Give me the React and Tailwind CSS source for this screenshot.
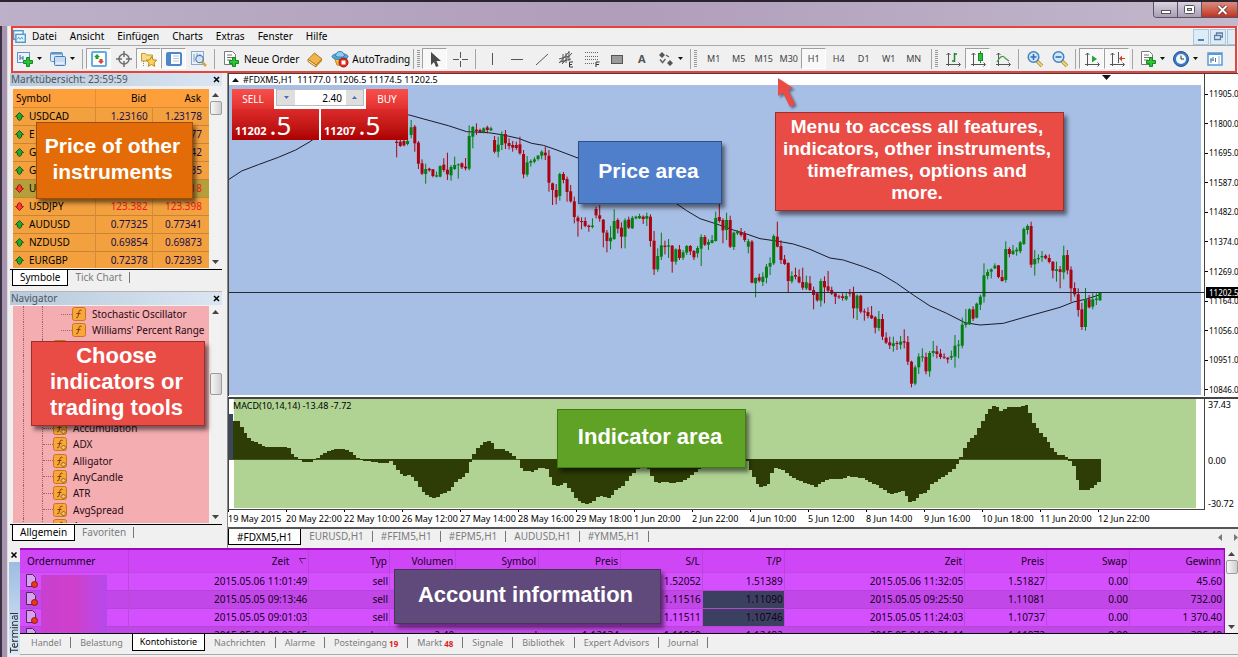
import { useState } from "react";

// Each bar: direction, high, body top, body bottom, low
const SESSIONS = [
  {
    base: 0,
    bars: `r 200 215 219 262,r 205 215 228 231,r 205 213 226 229,g 205 213 222 226,g 150 172 195 205,r 165 170 220 245,
r 213 218 281 297,r 268 280 311 315,g 281 297 312 341,r 293 296 301 305,r 297 298 318 322,g 305 316 320 322,g 286 288 320 322,
r 265 284 300 306,r 248 299 313 330,g 285 291 316 332,g 260 285 297 300,g 280 283 286 326,r 277 280 292 297,r 264 290 295 301,
g 166 198 296 301,g 168 171 200 235,r 160 179 183 195,r 176 180 186 188,g 172 175 187 190,r 167 172 180 190,g 170 175 181 183,
r 198 210 245 250,g 200 224 245 262,g 184 192 225 240,r 180 192 220 237,r 205 219 228 238,r 213 225 233 245,r 215 225 234 240,
r 200 223 250 254,r 240 252 313 325,g 258 277 314 320,g 268 273 278 290,g 262 268 275 280,g 255 257 267 272,g 241 245 257 268,
r 230 248 256 270,r 240 257 338 365,r 338 340 360 405`,
  },
  {
    base: 300,
    bars: `r 42 60 82 103,g 8 12 78 92,r 6 12 30 40,r 20 27 66 95,r 45 64 94 98,r 80 94 141 160,r 137 143 154 200,r 142 153 156 178,
r 142 153 168 172,r 164 167 171 185,g 145 167 171 175,r 110 117 136 145,r 105 136 146 155,r 147 149 188 232,r 180 188 213 247,
g 168 203 214 238,g 118 153 207 210,r 145 150 176 190,r 157 173 200 235,g 145 151 200 235,r 140 149 173 177,g 138 144 175 177,
g 137 140 145 148,g 131 138 145 147,r 136 140 147 162,g 128 138 146 168,r 133 140 213 230,r 183 212 298 315,g 235 258 298 305,
g 188 226 260 270,r 212 227 231 253,g 207 226 230 264,r 225 227 275 308,g 235 238 275 284,r 225 238 264 270,g 240 247 263 270,
g 225 228 248 255,r 225 228 244 255,r 240 243 262 270,g 228 234 250 263,g 193 201 236 288,r 195 201 224 228,g 208 216 224 240,
g 195 210 219 220,g 125 144 213 215,r 98 141 153 158,r 145 150 181 220,g 128 150 180 210,r 137 150 230 234,g 185 188 231 240,
g 180 184 190 195,r 174 186 195 200,r 183 190 210 216,g 207 214 230 250,r 210 215 338 340,g 322 324 340 382,r 311 322 332 337,
g 307 320 336 348,g 282 290 323 340,g 262 279 290 315,g 193 198 280 285,r 155 200 230 232,r 211 228 270 282,r 255 268 282 285,
r 277 279 333 367,g 304 318 334 340,r 293 315 320 328,r 298 320 337 340,r 293 336 353 360,g 317 337 355 360,r 318 340 360 363,
r 350 360 375 418,r 368 370 391 395,g 326 333 392 410,r 319 333 352 400,r 303 349 362 368,r 350 360 371 375,r 368 370 380 402,
r 374 379 382 387,r 370 379 384 392,g 368 378 388 392,r 357 368 371 380,r 350 369 415 445,g 373 377 415 450,r 374 377 425 430,
r 416 424 427 452,r 412 426 438 445,r 408 436 445 447,r 438 442 473 490,g 423 447 474 483,r 432 447 500 510,r 487 503 518 522,
r 500 517 526 537,g 500 520 528 545,r 513 519 522 540`,
  },
  {
    base: 390,
    bars: `g 408 425 434 448,r 388 424 428 445,r 408 426 485 495,r 482 485 551 562,g 496 502 551 556,g 460 470 502 522,g 445 469 472 485,
r 458 471 514 523,g 453 459 514 530,g 423 453 459 470,r 437 454 462 475,r 447 461 471 477,r 460 470 473 477,r 472 473 478 490,
g 452 468 473 480,g 405 437 470 503,g 420 434 437 475,g 353 374 437 445,g 327 369 375 383,g 325 328 373 375,r 319 328 356 363,
g 308 311 353 355,g 284 290 314 330,g 190 226 290 308,g 208 216 228 238,g 205 208 215 235,g 190 197 205 207,r 195 196 231 235,
r 210 231 243 245,g 124 147 240 248,r 142 147 162 172,g 135 152 162 165,g 142 149 154 167,g 123 127 154 160,g 82 87 132 135,
g 73 78 90 103,r 65 78 194 203,g 150 177 193 227,g 163 174 178 190,g 153 168 172 185,r 163 167 175 178,r 163 174 186 190,
r 184 185 212 235,g 185 208 213 245,r 198 208 216 265,g 137 166 217 238,r 150 165 211 223,r 199 209 265 305,r 247 264 283 290,
r 265 283 330 350,r 308 328 381 390,g 264 297 381 392,r 285 298 322 325,g 280 298 320 328,g 280 296 300 315,g 276 277 301 303`,
  },
];

const CANDLES = SESSIONS.flatMap(({ base, bars }) =>
  bars.split(",").map((bar) => {
    const [dir, ...v] = bar.trim().split(" ");
    const [high, top, bottom, low] = v.map((n) => Number(n) + base);
    return { up: dir === "g", high, top, bottom, low };
  })
);

const FIRST_X = 515;
const LAST_X = 2625;
const CANDLE_STEP = (LAST_X - FIRST_X) / (CANDLES.length - 1);

const MOVING_AVERAGE =
  "12,328 50,303 100,284 160,262 212,240 255,215 330,160 430,130 553,135 600,148 670,167 725,185 790,188 830,194 880,205 920,220 955,226 990,238 1180,310 1350,398 1385,422 1425,446 1475,462 1525,480 1565,492 1605,506 1655,513 1705,522 1755,538 1815,564 1855,570 1915,590 1965,610 2015,640 2065,675 2115,708 2165,730 2220,758 2265,765 2335,760 2415,737 2505,712 2545,696 2585,687 2625,674";

const MACD_POINTS = [
  [12, 60], [24, 92], [38, 93], [50, 110], [62, 130], [75, 148], [100, 160], [120, 170], [165, 172], [190, 172],
  [205, 195], [220, 206], [235, 216], [255, 218], [270, 210], [300, 188], [330, 178], [360, 178], [375, 186],
  [390, 198], [410, 210], [450, 216], [480, 220], [500, 212], [515, 235], [535, 260], [555, 255], [575, 275],
  [590, 300], [610, 320], [630, 325], [650, 312], [670, 305], [690, 280], [710, 262], [722, 258], [732, 228],
  [742, 200], [760, 172], [780, 155], [798, 150], [810, 176], [830, 176], [860, 192], [878, 206], [888, 232],
  [900, 243], [925, 245], [950, 232], [965, 235], [975, 260], [990, 290], [1020, 280], [1040, 305], [1055, 328],
  [1085, 343], [1105, 335], [1120, 317], [1155, 325], [1170, 300], [1190, 293], [1210, 265], [1240, 235],
  [1270, 235], [1285, 265], [1295, 282], [1320, 275], [1340, 280], [1375, 275], [1400, 255], [1420, 240],
  [1450, 225], [1520, 200], [1560, 200], [1575, 240], [1600, 285], [1613, 292], [1635, 280], [1640, 250],
  [1650, 235], [1675, 240], [1695, 258], [1725, 273], [1777, 292], [1785, 278], [1815, 268], [1855, 265],
  [1870, 258], [1915, 265], [1955, 285], [1995, 312], [2035, 303], [2055, 335], [2070, 333], [2085, 312],
  [2105, 308], [2120, 282], [2155, 260], [2185, 240], [2205, 208], [2215, 180], [2230, 155], [2255, 130],
  [2275, 88], [2290, 60], [2310, 45], [2330, 65], [2345, 50], [2385, 52], [2408, 42], [2420, 90], [2445, 125],
  [2465, 150], [2485, 180], [2505, 198], [2520, 194], [2530, 208], [2545, 225], [2555, 265], [2565, 300],
  [2595, 300], [2615, 280], [2630, 270],
];

const macdAt = (x) => {
  const i = MACD_POINTS.findIndex(([px]) => px >= x);
  if (i <= 0) return MACD_POINTS[0][1];
  const [x0, y0] = MACD_POINTS[i - 1];
  const [x1, y1] = MACD_POINTS[i];
  return Math.round((y0 + ((y1 - y0) * (x - x0)) / (x1 - x0)) / 3) * 3;
};

const MACD_BARS = Array.from({ length: 240 }, (_, i) => 12 + i * 10.9).map((x) => ({
  x,
  y: macdAt(x + 5),
}));

const SYMBOLS = [
  { name: "USDCAD", bid: "1.23160", ask: "1.23178", up: true },
  { name: "E", bid: "", ask: "77", up: true },
  { name: "G", bid: "", ask: "42", up: true },
  { name: "G", bid: "", ask: "35", up: true },
  { name: "U", bid: "", ask: "18", up: false, selected: true },
  { name: "USDJPY", bid: "123.382", ask: "123.398", up: false },
  { name: "AUDUSD", bid: "0.77325", ask: "0.77341", up: true },
  { name: "NZDUSD", bid: "0.69854", ask: "0.69873", up: true },
  { name: "EURGBP", bid: "0.72378", ask: "0.72393", up: true },
];

const NAV_ITEMS = [
  { name: "Stochastic Oscillator", sub: true },
  { name: "Williams' Percent Range", sub: true },
  { name: "" }, { name: "" }, { name: "" }, { name: "" }, { name: "" },
  { name: "Accumulation" },
  { name: "ADX" },
  { name: "Alligator" },
  { name: "AnyCandle" },
  { name: "ATR" },
  { name: "AvgSpread" },
  { name: "A" },
];

const PRICES = ["11905.0", "11800.0", "11695.0", "11587.0", "11482.0", "11374.0", "11269.0", "11164.0", "11056.0", "10951.0", "10846.0"];

const DATES = [
  "19 May 2015", "20 May 22:00", "22 May 10:00", "26 May 12:00", "27 May 14:00", "28 May 16:00", "29 May 18:00",
  "1 Jun 20:00", "2 Jun 22:00", "4 Jun 10:00", "5 Jun 12:00", "8 Jun 14:00", "9 Jun 16:00", "10 Jun 18:00",
  "11 Jun 20:00", "12 Jun 22:00",
];

const ORDERS = [
  ["", "2015.05.06 11:01:49", "sell", "", "", "", "1.52052", "1.51389", "2015.05.06 11:32:05", "1.51827", "0.00", "45.60"],
  ["", "2015.05.05 09:13:46", "sell", "", "", "", "1.11516", "1.11090", "2015.05.05 09:25:50", "1.11081", "0.00", "732.00"],
  ["", "2015.05.05 09:01:03", "sell", "", "", "", "1.11511", "1.10746", "2015.05.05 11:24:03", "1.10737", "0.00", "1 370.40"],
  ["", "2015.05.04 09:02:15", "buy", "2.40", "eurusd", "1.12134", "1.11969", "1.12482", "2015.05.04 09:21:44", "1.11972", "0.00", "-396.40"],
];

const ORDER_HEADS = ["Ordernummer", "Zeit", "Typ", "Volumen", "Symbol", "Preis", "S/L", "T/P", "Zeit", "Preis", "Swap", "Gewinn"];
const ORDER_COLS = [
  "w-[9%]", "w-[15%]", "w-[6.7%]", "w-[5.5%]", "w-[6.9%]", "w-[6.8%]", "w-[6.8%]", "w-[6.8%]", "w-[15%]", "w-[6.8%]", "w-[6.9%]", "w-[7.8%]",
];

/* ---------- Icons ---------- */

const Icon = ({ children, size = 18 }) => (
  <svg width={size} height={size} viewBox="0 0 18 18" fill="none" className="shrink-0" aria-hidden="true">
    {children}
  </svg>
);

const Plus = ({ x, y }) => (
  <path
    transform={`translate(${x} ${y})`}
    d="M3.500.500h3v3h3v3h-3v3h-3v-3h-3v-3h3z"
    fill="#2fc13a"
    stroke="#128a1c"
  />
);

const NewChartIcon = () => (
  <Icon>
    <rect x="1.5" y="2.5" width="12" height="10" fill="#eaf3fc" stroke="#5e93c9" />
    <path d="M4 5v5M4 8h3M7 6v4" stroke="#3b6ea8" />
    <Plus x="7" y="7" />
  </Icon>
);

const ProfilesIcon = () => (
  <Icon>
    <rect x="1.5" y="2.5" width="12" height="9" rx="1" fill="#dcebf9" stroke="#5e93c9" />
    <path d="M2 3.5h11" stroke="#5e93c9" strokeWidth="2" />
    <rect x="5.5" y="6.5" width="11" height="9" rx="1" fill="#c6dcf3" stroke="#4c7fb5" />
    <path d="M7 13h8" stroke="#fff" />
  </Icon>
);

const MarketIcon = () => (
  <Icon>
    <rect x="2" y="2" width="14" height="14" rx="1" fill="#fff" stroke="#62aee0" strokeWidth="2" />
    <path d="M7 4l3 3H8.500v2h-3V7H4z" fill="#18a32b" />
    <path d="M11 14l3-3h-1.500V9h-3v2H8z" fill="#e0432c" />
  </Icon>
);

const TargetIcon = () => (
  <Icon>
    <circle cx="9" cy="9" r="5" stroke="#6e6e6e" strokeWidth="1.5" />
    <path d="M9 1v6M9 11v6M1 9h6M11 9h6" stroke="#6e6e6e" strokeWidth="1.5" />
  </Icon>
);

const NavigatorIcon = () => (
  <Icon>
    <path d="M1.500 3.500h4l1 1.500h6v6h-11z" fill="#f8dc85" stroke="#c59a35" />
    <path d="M3.500 11v5" stroke="#888" strokeDasharray="1 1" />
    <path d="M11.500 6.500l1.600 3.300 3.600.4-2.700 2.500.7 3.600-3.200-1.800-3.200 1.800.7-3.600L6.300 10.200l3.600-.4z" fill="#fdd45a" stroke="#bd8618" />
  </Icon>
);

const TerminalIcon = () => (
  <Icon>
    <rect x="2" y="3" width="14" height="12" rx="1" fill="#fff" stroke="#4f86c6" strokeWidth="2" />
    <path d="M3 4h3v10H3z" fill="#4f86c6" />
    <path d="M8 6h6M8 8.500h6M8 11h6" stroke="#a9c6e6" />
  </Icon>
);

const TesterIcon = () => (
  <Icon>
    <rect x="1.5" y="1.5" width="12" height="13" fill="#eaf3fc" stroke="#86a9cf" />
    <path d="M4 4v8M7 3v6M10 4v7" stroke="#7a9cc2" />
    <path d="M12 12l4 4" stroke="#d9a441" strokeWidth="2.5" />
    <circle cx="9.5" cy="9" r="3.7" fill="#cfe6fb" fillOpacity=".8" stroke="#5b7fa5" strokeWidth="1.2" />
  </Icon>
);

const OrderIcon = () => (
  <Icon>
    <path d="M2.500 1.500h8l3 3v10h-11z" fill="#fff" stroke="#777" />
    <path d="M5 5h5M5 7.500h6M5 10h4" stroke="#777" />
    <Plus x="7" y="7" />
  </Icon>
);

const BookIcon = () => (
  <Icon>
    <path d="M2 9.500L8.500 3l7.500 6-6 6z" fill="#f0b44e" stroke="#b57518" />
    <path d="M2 9.500v2.200L10 17v-2z" fill="#fff3cf" stroke="#b57518" />
    <path d="M10 17l6-6V9l-6 6z" fill="#c98a2a" />
  </Icon>
);

const AutoIcon = () => (
  <Icon>
    <path d="M3 7l3 8 7 1 3-8z" fill="#f3c043" stroke="#bb8518" />
    <ellipse cx="9" cy="6.5" rx="8" ry="3" fill="#5aa7da" stroke="#2f7eb5" />
    <path d="M4.500 6c0-6 9-6 9 0-2 1.600-7 1.600-9 0z" fill="#8fcdf0" stroke="#2f7eb5" />
    <circle cx="12.5" cy="12.5" r="4.5" fill="#dd2e22" stroke="#a8170f" />
    <rect x="10.5" y="10.5" width="4" height="4" fill="#fff" />
  </Icon>
);

const CursorIcon = () => (
  <Icon>
    <path d="M5 2v13l3-3 2 5 2.500-1-2-5H15z" fill="#4a4a4a" />
  </Icon>
);

const CrossIcon = () => (
  <Icon>
    <path d="M9.500 2v6M9.500 11v6M2 9.500h6M11 9.500h6" stroke="#555" />
  </Icon>
);

const ChannelIcon = () => (
  <Icon>
    <path d="M1 13L11 2M4 14L14 3M1 9l10-3M2 12l11-3M5 4v9M8 3v10M11 1v10" stroke="#555" />
    <path d="M15 12h-3.500v5H15M11.500 14.500H14" stroke="#333" />
  </Icon>
);

const FiboIcon = () => (
  <Icon>
    <path d="M2 2.500h13M2 6.500h13M2 9.500h13M2 13.500h9" stroke="#666" strokeDasharray="1 1" />
    <path d="M13 17v-5h3.500M13 14.500h3" stroke="#333" />
  </Icon>
);

const ShapesIcon = () => (
  <Icon>
    <path d="M5 2l3 3-3 3-3-3zM13 10l3 3-3 3-3-3z" fill="#555" />
    <path d="M3 9.500l2.500 3L8.500 9M9 5l3 2" stroke="#666" strokeWidth="1.5" />
  </Icon>
);

const Axes = () => <path d="M4.500 3v13M2 14.500h14M2.500 5l2-2 2 2M14.500 12.500l2 2-2 2" stroke="#555" />;

const BarsIcon = () => (
  <Icon>
    <Axes />
    <path d="M10.500 3v9M8 11h2.500M10.500 4H13" stroke="#1c8a2b" strokeWidth="1.5" />
  </Icon>
);

const CandleIcon = () => (
  <Icon>
    <Axes />
    <path d="M11.500 1v12" stroke="#1c8a2b" />
    <rect x="9.5" y="3.5" width="4" height="7" fill="#27c23a" stroke="#1c8a2b" />
  </Icon>
);

const LineIcon = () => (
  <Icon>
    <Axes />
    <path d="M3 12c3-6 6-7 8-4l4 3" stroke="#3f9a45" strokeWidth="1.2" />
  </Icon>
);

const ZoomIcon = ({ plus }) => (
  <Icon>
    <path d="M11 11l5 5" stroke="#b5892e" strokeWidth="3.5" />
    <path d="M11 11l5 5" stroke="#f7d373" strokeWidth="1.8" />
    <circle cx="7.5" cy="7" r="5.3" fill="#d3e9fb" stroke="#3f83c4" strokeWidth="1.5" />
    <path d={plus ? "M4.500 7h6M7.500 4v6" : "M4.500 7h6"} stroke="#2f6fb0" strokeWidth="1.6" />
  </Icon>
);

const ScrollIcon = () => (
  <Icon>
    <Axes />
    <path d="M9 5.500l5 3.500-5 3.500z" fill="#2aa43a" />
  </Icon>
);

const ShiftIcon = () => (
  <Icon>
    <Axes />
    <path d="M10.500 2v11" stroke="#555" />
    <path d="M17 8h-3V5.500L11 8.500l3 3V9h3z" fill="#d04424" />
  </Icon>
);

const ClockIcon = () => (
  <Icon>
    <circle cx="9" cy="9" r="7.5" fill="#3d78c4" stroke="#24528f" />
    <circle cx="9" cy="9" r="5" fill="#f2f8ff" />
    <path d="M9 5.500V9h3" stroke="#333" />
  </Icon>
);

const TemplateIcon = () => (
  <Icon>
    <rect x="2" y="3" width="14" height="12" fill="#fff" stroke="#5a9bd6" strokeWidth="1.5" />
    <path d="M2 4h14" stroke="#5a9bd6" strokeWidth="2" />
    <path d="M5 8v5M7 7v4M9.500 8v4M4 10h4" stroke="#4b78ab" />
    <path d="M12 7h2M12 9h2M12 11h2M12 13h2" stroke="#8db3dc" />
  </Icon>
);

const Caret = () => (
  <svg width="5" height="3" viewBox="0 0 5 3" className="shrink-0" aria-hidden="true">
    <path d="M0 0h5L2.500 3z" fill="#111" />
  </svg>
);

const Arrow = ({ up }) => (
  <svg width="9" height="9" viewBox="0 0 9 9" className="shrink-0" aria-hidden="true">
    {up ? (
      <path d="M4.500.5l4 4-2 .5v2l-2 1.500-2-1.500V5L.5 4.500z" fill="#27a62e" stroke="#0f5c12" />
    ) : (
      <path d="M4.500 8.500l4-4-2-.5V2l-2-1.500L2.500 2v2l-2 .5z" fill="#f0402c" stroke="#a31414" />
    )}
  </svg>
);

const FnIcon = ({ sub }) => (
  <svg width="14" height="14" viewBox="0 0 14 14" className="shrink-0" aria-hidden="true">
    <rect x=".5" y=".5" width="13" height="13" rx="2" fill="#f9a63a" stroke="#c9761a" />
    <path d="M9.500 3.500c-2-1-2.500.5-2.700 2L6 9.500c-.3 1.300-1 1.500-2 1M4.500 6.500h4" fill="none" stroke="#7c3f06" />
    {!sub && <path d="M10.500 8l2.500 2.500-2.500 2.500L8 10.500z" fill="#f7c56b" stroke="#8a5a1a" />}
  </svg>
);

const OrderDocIcon = () => (
  <svg width="13" height="14" viewBox="0 0 13 14" aria-hidden="true">
    <path d="M1.500.5h6l3 3v9h-9z" fill="#d9a0f2" stroke="#4d2a5c" />
    <circle cx="9.5" cy="10.5" r="3" fill="#e8381f" stroke="#8e1a0b" />
  </svg>
);

/* ---------- Shared pieces ---------- */

const Tool = ({ label, pressed, children }) => (
  <button
    type="button"
    aria-label={label}
    className={`flex h-[21px] w-[25px] items-center justify-center border ${
      pressed ? "border-[#a0a0a0] border-r-white border-b-white bg-[#f8f8f8]" : "border-transparent"
    }`}
  >
    {children}
  </button>
);

const MenuTool = ({ label, children }) => (
  <button type="button" aria-label={label} className="flex h-[21px] w-[33px] items-center gap-[3px] px-[3px]">
    {children}
    <Caret />
  </button>
);

const Sep = () => <span className="mx-[3px] h-[20px] w-px shrink-0 bg-[#a5a5a5]" />;

const Grip = () => (
  <span className="mr-[2px] h-[18px] w-[3px] shrink-0 bg-[repeating-linear-gradient(#9a9a9a_0_1px,#f0f0f0_1px_2px)]" />
);

const Callout = ({ className, children }) => (
  <div
    className={`absolute z-10 flex items-center justify-center border pb-[3px] text-center font-['Liberation_Sans',Arial,sans-serif] font-bold whitespace-nowrap text-white shadow-[3px_4px_4px_rgba(0,0,0,0.5)] ${className}`}
  >
    {children}
  </div>
);

const Scrollbar = ({ thumb }) => (
  <div className="flex w-[13px] shrink-0 flex-col items-center justify-between bg-[#f1f1f1] py-1">
    <svg width="7" height="4" viewBox="0 0 7 4"><path d="M0 4h7L3.500 0z" fill="#444" /></svg>
    <span className={`w-3 rounded-[2px] border border-[#9c9c9c] bg-linear-to-r from-[#f8f8f8] to-[#cfcfcf] ${thumb}`} />
    <span className="flex-1" />
    <svg width="7" height="4" viewBox="0 0 7 4"><path d="M0 0h7L3.500 4z" fill="#444" /></svg>
  </div>
);

const DockTitle = ({ children }) => (
  <div className="flex h-[13px] items-center justify-between bg-linear-to-r from-[#b8c9da] to-[#dbe6f2] pr-[2px] pl-px text-[#4a5560]">
    <h2 className="pb-[2px]">{children}</h2>
    <button type="button" aria-label="Schließen" className="flex">
      <svg width="7" height="7" viewBox="0 0 7 7"><path d="M1 1l5 5M6 1L1 6" stroke="#000" strokeWidth="1.5" /></svg>
    </button>
  </div>
);

const DockTabs = ({ tabs }) => (
  <div className="flex h-[17px] items-start border-t border-black pl-[2px]">
    <button type="button" className="h-[16px] border border-t-0 border-black bg-white px-[7px] leading-[13px] text-black">
      {tabs[0]}
    </button>
    <button type="button" className="px-[7px] leading-[14px] text-[#7c7c7c]">{tabs[1]}</button>
    <span className="mt-[2px] h-[11px] w-px bg-[#777]" />
  </div>
);

/* ---------- Sections ---------- */

const TitleBar = () => (
  <div className="flex h-[26px] justify-end border-t-2 border-[#2b2430] bg-linear-to-r from-[#bdb0c8] via-[#b09dba] to-[#c3b8cc]">
    <div className="flex h-4 overflow-hidden rounded-bl-[4px] border border-t-0 border-[#5c5266]">
      <button type="button" aria-label="Minimieren" className="flex w-6 items-center justify-center border-r border-[#5c5266] bg-linear-to-b from-[#d9d2e0] to-[#a99fb4]">
        <span className="mt-1 h-1 w-[10px] border border-[#555] bg-white" />
      </button>
      <button type="button" aria-label="Wiederherstellen" className="flex w-6 items-center justify-center border-r border-[#5c5266] bg-linear-to-b from-[#d9d2e0] to-[#a99fb4]">
        <svg width="11" height="9" viewBox="0 0 11 9">
          <rect x=".5" y=".5" width="10" height="8" rx="1" fill="#fff" stroke="#555" />
          <rect x="3.5" y="3.5" width="4" height="2" fill="#cfc6d6" stroke="#555" />
        </svg>
      </button>
      <button type="button" aria-label="Fenster schließen" className="flex w-[35px] items-center justify-center bg-linear-to-b from-[#d98b80] to-[#bf2f1d] pl-[6px]">
        <svg width="11" height="10" viewBox="0 0 11 10">
          <path d="M1.500 1l8 8M9.500 1l-8 8" stroke="#5a2a2a" strokeWidth="3.5" />
          <path d="M1.500 1l8 8M9.500 1l-8 8" stroke="#fff" strokeWidth="2" />
        </svg>
      </button>
    </div>
  </div>
);

const MenuBar = () => (
  <nav className="flex h-[18px] items-center border-b border-[#a9a9a9]">
    <Icon size={13}>
      <rect x="1" y="1" width="13" height="12" fill="#fff" stroke="#4f9bd0" strokeWidth="2" />
      <rect x="4" y="6" width="13" height="11" fill="#e7f4fc" stroke="#4f9bd0" strokeWidth="2" />
      <path d="M6 13l2-3 2 3 2-3 2 3" stroke="#3a79ad" />
    </Icon>
    <ul className="ml-[6px] flex gap-[13px] pb-[2px] text-[10px] text-black">
      {["Datei", "Ansicht", "Einfügen", "Charts", "Extras", "Fenster", "Hilfe"].map((item) => (
        <li key={item}>
          <button type="button">{item}</button>
        </li>
      ))}
    </ul>
    <div className="ml-auto flex gap-px overflow-hidden">
      <button type="button" aria-label="Chart minimieren" className="flex h-4 w-4 items-end justify-center border border-[#a9c6dc] bg-[#dcedf7] pb-[3px]">
        <span className="h-[2px] w-[6px] bg-[#5b7ea0]" />
      </button>
      <button type="button" aria-label="Chart wiederherstellen" className="flex h-4 w-4 items-center justify-center border border-[#a9c6dc] bg-[#dcedf7]">
        <svg width="9" height="9" viewBox="0 0 9 9" fill="none" stroke="#5b7ea0"><path d="M2.500 3V1h6v4h-2M.5 3.500h6v4h-6z" strokeWidth="1.3" /></svg>
      </button>
      <button type="button" aria-label="Chart schließen" className="h-4 w-2 border border-r-0 border-[#a9c6dc] bg-[#dcedf7]" />
    </div>
  </nav>
);

const ToolBar = () => {
  const [frame, setFrame] = useState("H1");
  return (
    <div className="flex h-[25px] items-center text-[11px]">
      <MenuTool label="Neuer Chart"><NewChartIcon /></MenuTool>
      <MenuTool label="Profile"><ProfilesIcon /></MenuTool>
      <Sep />
      <Tool label="Marktübersicht" pressed><MarketIcon /></Tool>
      <Tool label="Datenfenster"><TargetIcon /></Tool>
      <Tool label="Navigator" pressed><NavigatorIcon /></Tool>
      <Tool label="Terminal" pressed><TerminalIcon /></Tool>
      <Tool label="Strategietester"><TesterIcon /></Tool>
      <Sep />
      <button type="button" className="ml-1 flex items-center gap-1 text-[10px] whitespace-nowrap text-black">
        <OrderIcon />Neue Order
      </button>
      <button type="button" aria-label="MetaEditor" className="mx-[7px]"><BookIcon /></button>
      <button type="button" className="flex items-center gap-[3px] text-[10px] whitespace-nowrap text-black">
        <AutoIcon />AutoTrading
      </button>
      <Sep />
      <Grip />
      <Tool label="Cursor" pressed><CursorIcon /></Tool>
      <Tool label="Fadenkreuz"><CrossIcon /></Tool>
      <Sep />
      <Tool label="Vertikale Linie"><Icon><path d="M9.500 3v12" stroke="#555" /></Icon></Tool>
      <Tool label="Horizontale Linie"><Icon><path d="M3 9.500h12" stroke="#555" /></Icon></Tool>
      <Tool label="Trendlinie"><Icon><path d="M3 15L15 4" stroke="#555" /></Icon></Tool>
      <Tool label="Kanal"><ChannelIcon /></Tool>
      <Tool label="Fibonacci"><FiboIcon /></Tool>
      <Tool label="Rechteck"><Icon><rect x="3.5" y="5.5" width="11" height="8" fill="#9a9a9a" stroke="#555" /></Icon></Tool>
      <Tool label="Text"><span className="font-bold text-[#555]">A</span></Tool>
      <MenuTool label="Pfeile"><ShapesIcon /></MenuTool>
      <Sep />
      <Grip />
      <div className="flex px-[2px]">
        {["M1", "M5", "M15", "M30", "H1", "H4", "D1", "W1", "MN"].map((name) => (
          <button
            key={name}
            type="button"
            aria-pressed={frame === name}
            onClick={() => setFrame(name)}
            className={`flex h-[21px] w-[25px] items-center justify-center border text-[9px] text-[#444] ${
              frame === name ? "border-[#a0a0a0] border-r-white border-b-white bg-[#f8f8f8]" : "border-transparent"
            }`}
          >
            {name}
          </button>
        ))}
      </div>
      <Sep />
      <Grip />
      <Tool label="Balken"><BarsIcon /></Tool>
      <Tool label="Kerzen" pressed><CandleIcon /></Tool>
      <Tool label="Linie"><LineIcon /></Tool>
      <Sep />
      <Tool label="Vergrößern"><ZoomIcon plus /></Tool>
      <Tool label="Verkleinern"><ZoomIcon /></Tool>
      <Sep />
      <Tool label="Automatisch scrollen" pressed><ScrollIcon /></Tool>
      <Tool label="Chart verschieben" pressed><ShiftIcon /></Tool>
      <Sep />
      <MenuTool label="Indikatoren"><OrderIcon /></MenuTool>
      <MenuTool label="Zeitrahmen"><ClockIcon /></MenuTool>
      <Tool label="Vorlagen"><TemplateIcon /></Tool>
    </div>
  );
};

const MarketWatch = () => (
  <section className="relative">
    <DockTitle>Marktübersicht: 23:59:59</DockTitle>
    <div className="mt-[3px] flex h-[179px] pl-[3px]">
      <div className="flex-1 overflow-hidden bg-[#f3a03f]">
        <table className="w-full table-fixed border-collapse text-black">
          <colgroup>
            <col className="w-[42%]" />
            <col className="w-[29%]" />
            <col className="w-[29%]" />
          </colgroup>
          <thead>
            <tr className="h-[18px] border-b border-[#d98a30] bg-[#fd9f3b]">
              <th className="pl-[3px] text-left font-normal">Symbol</th>
              <th className="border-l border-[#e58f33] pr-[6px] text-right font-normal">Bid</th>
              <th className="pr-2 text-right font-normal">Ask</th>
            </tr>
          </thead>
          <tbody>
            {SYMBOLS.map((s, i) => (
              <tr key={i} className={`h-[18px] border-b border-[#c98535] ${s.selected ? "bg-[#b59f3a]" : ""}`}>
                <td className="border-r border-[#d08c3a] p-0 pl-[2px]">
                  <span className="flex items-center gap-[5px]">
                    <Arrow up={s.up} />
                    {s.name}
                  </span>
                </td>
                <td className={`border-r border-[#d08c3a] p-0 pr-[4px] text-right ${s.up ? "text-[#1a0d4a]" : "text-[#ee1c1c]"}`}>{s.bid}</td>
                <td className={`p-0 pr-[7px] text-right ${s.up ? "text-[#1a0d4a]" : "text-[#ee1c1c]"}`}>{s.ask}</td>
              </tr>
            ))}
          </tbody>
        </table>
      </div>
      <Scrollbar thumb="mt-1 h-[14px]" />
    </div>
    <div className="mt-px">
      <DockTabs tabs={["Symbole", "Tick Chart"]} />
    </div>
    <Callout className="top-[49px] left-[26px] h-[77px] w-[157px] border-[#a34c05] bg-[#e36c09] pr-1 text-[21px] leading-[26px]">
      Price of other
      <br />
      instruments
    </Callout>
  </section>
);

const Navigator = () => (
  <section className="relative mt-[5px] border-t border-[#b5b5b5]">
    <DockTitle>Navigator</DockTitle>
    <div className="mt-px flex h-[217px] pl-[3px]">
      <div className="flex-1 overflow-hidden bg-[#f4adb1]">
        <ul className="grid h-[228px] auto-rows-fr pl-[10px]">
          {NAV_ITEMS.map((item, i) => (
            <li key={i} className="flex border-l border-dotted border-[#a06068] pl-[18px]">
              <div className={`flex flex-1 items-center border-l border-dotted border-[#a06068] ${item.sub ? "pl-[18px]" : ""}`}>
                <span className={`border-t border-dotted border-[#a06068] ${item.sub ? "w-[11px]" : "w-[10px]"}`} />
                <FnIcon sub={item.sub} />
                <span className="pl-[6px] whitespace-nowrap text-[#2a0a12]">{item.name}</span>
              </div>
            </li>
          ))}
        </ul>
      </div>
      <Scrollbar thumb="mt-[59px] h-[22px]" />
    </div>
    <div className="mt-px">
      <DockTabs tabs={["Allgemein", "Favoriten"]} />
    </div>
    <Callout className="top-[49px] left-[21px] h-[85px] w-[174px] border-[#9c2f2b] bg-[#e94b45] pr-[3px] text-[22px] leading-[26px]">
      Choose
      <br />
      indicators or
      <br />
      trading tools
    </Callout>
  </section>
);

const OneClickPanel = () => (
  <div className="absolute top-[15px] left-[3px] flex w-[176px] flex-col bg-white text-white">
    <div className="flex h-5 justify-between">
      <button type="button" className="w-[42px] bg-linear-to-b from-[#f8504c] to-[#e2302e] text-[10px]">SELL</button>
      <div className="mx-[2px] flex h-[17px] flex-1 border border-[#bbb] bg-white">
        <button type="button" aria-label="Volumen verringern" className="flex w-[18px] items-center justify-center bg-[#dedede]">
          <svg width="5" height="3" viewBox="0 0 5 3"><path d="M0 0h5L2.500 3z" fill="#4b6fae" /></svg>
        </button>
        <input aria-label="Volumen" defaultValue="2.40" className="w-0 flex-1 pr-1 text-right text-[10px] text-black" />
        <button type="button" aria-label="Volumen erhöhen" className="flex w-[17px] items-center justify-center bg-[#dedede]">
          <svg width="5" height="3" viewBox="0 0 5 3"><path d="M0 3h5L2.500 0z" fill="#4b6fae" /></svg>
        </button>
      </div>
      <button type="button" className="w-[42px] bg-linear-to-b from-[#f8504c] to-[#e2302e] text-[10px]">BUY</button>
    </div>
    <div className="flex h-[31px] gap-[2px]">
      {["11202", "11207"].map((p) => (
        <div key={p} className="flex flex-1 items-baseline gap-[3px] bg-linear-to-b from-[#dd2a2a] to-[#ac0000] pl-[3px] leading-[32px]">
          <span className="text-[11px] font-bold">{p}</span>
          <span className="text-[26px]">.5</span>
        </div>
      ))}
    </div>
  </div>
);

const PriceChart = () => (
  <div className="relative flex border-t border-l border-[#444] bg-white">
    <div className="relative min-w-0 flex-1 border-r border-[#444]">
      <div className="flex h-[11px] items-center gap-1 pl-[3px] text-[9px] text-black">
        <svg width="7" height="4" viewBox="0 0 7 4"><path d="M0 4h7L3.500 0z" fill="#111" /></svg>
        <span>#FDXM5,H1&nbsp; 11177.0 11206.5 11174.5 11202.5</span>
        <svg width="9" height="5" viewBox="0 0 9 5" className="mr-[93px] mb-1 ml-auto"><path d="M0 0h9L4.500 5z" fill="#111" /></svg>
      </div>
      <svg viewBox="12 45 2925 933" preserveAspectRatio="none" className="block h-[311px] w-full">
        <rect x="12" y="45" width="2916" height="930" fill="#a7bee5" />
        <polyline points={MOVING_AVERAGE} fill="none" stroke="#1a1a2a" strokeWidth="3" />
        {CANDLES.map((c, i) => {
          const x = FIRST_X + i * CANDLE_STEP;
          const color = c.up ? "#067f12" : "#a80510";
          return (
            <g key={i} fill={color}>
              <rect x={x - 1.5} y={c.high} width="3" height={c.low - c.high} />
              <rect x={x - 4.5} y={c.top} width="9" height={Math.max(c.bottom - c.top, 3)} />
            </g>
          );
        })}
        <path d="M12 667.500H2937" stroke="#222a33" strokeWidth="3" />
      </svg>
      <OneClickPanel />
    </div>
    <div className="relative flex w-[33px] flex-col justify-between overflow-hidden pt-[14px] text-[8px] leading-3 text-black">
      {PRICES.map((p) => (
        <span key={p} className="flex items-center gap-px">
          <span className="h-px w-[3px] shrink-0 bg-black" />
          {p}
        </span>
      ))}
      <span className="absolute top-[213px] left-px w-full bg-black pl-[3px] leading-[11px] text-white">11202.5</span>
    </div>
    <Callout className="top-[67px] left-[349px] h-[63px] w-[144px] border-[#2d4f85] bg-[#4f7ecb] pr-[3px] text-[21px]">
      Price area
    </Callout>
    <Callout className="top-[38px] left-[546px] h-[99px] w-[289px] border-[#9c2f2b] bg-[#e94b45] pr-[5px] text-[19px] leading-[22px]">
      Menu to access all features,
      <br />
      indicators, other instruments,
      <br />
      timeframes, options and
      <br />
      more.
    </Callout>
    <svg width="22" height="34" viewBox="0 0 22 34" className="absolute top-[2px] left-[547px] z-10 drop-shadow-[2px_2px_1px_rgba(0,0,0,0.4)]">
      <path d="M2 2l15 10-5 2 7 14-5 3-7-14-5 3z" fill="#e94b45" />
    </svg>
  </div>
);

const Macd = () => (
  <div className="relative mt-px flex border-t-2 border-l border-[#444] bg-white">
    <div className="relative min-w-0 flex-1 border-r border-b border-[#444]">
      <svg viewBox="12 27 2925 330" preserveAspectRatio="none" className="block h-[110px] w-full">
        <rect x="27" y="27" width="2886" height="327" fill="#b0d394" />
        <path d="M12 208.500H2625" stroke="#46571c" strokeWidth="3" />
        <g shapeRendering="crispEdges">
          {MACD_BARS.map((b, i) => (
            <rect
              key={i}
              x={b.x}
              y={Math.min(b.y, 208)}
              width="11"
              height={Math.abs(b.y - 208)}
              fill={i === 0 ? "#39485a" : "#2e3c05"}
            />
          ))}
        </g>
      </svg>
      <span className="absolute top-px left-1 text-[9px] leading-3 text-black">MACD(10,14,14) -13.48 -7.72</span>
    </div>
    <div className="flex w-[33px] flex-col justify-between overflow-hidden text-[9px] leading-3 text-black">
      <span className="pl-[3px]">37.43</span>
      <span className="pt-3 pl-[3px]">0.00</span>
      <span className="pl-[3px]">-30.72</span>
    </div>
    <Callout className="top-[10px] left-[328px] h-[59px] w-[189px] border-[#3f7d17] bg-[#5fa226] pr-[3px] text-[22px]">
      Indicator area
    </Callout>
  </div>
);

const ChartTabs = () => (
  <div className="flex h-[18px] items-start border-t-2 border-[#555] text-[10px]">
    <button type="button" className="h-[16px] border border-t-0 border-black bg-white px-2 leading-[14px] text-black">#FDXM5,H1</button>
    {["EURUSD,H1", "#FFIM5,H1", "#EPM5,H1", "AUDUSD,H1", "#YMM5,H1"].map((t) => (
      <div key={t} className="flex items-center">
        <button type="button" className="px-2 leading-[14px] text-[#7c7c7c]">{t}</button>
        <span className="h-[11px] w-px bg-[#777]" />
      </div>
    ))}
    <div className="mt-[5px] ml-auto flex gap-3">
      <svg width="4" height="7" viewBox="0 0 4 7"><path d="M4 0v7L0 3.500z" fill="#777" /></svg>
      <svg width="4" height="7" viewBox="0 0 4 7"><path d="M0 0v7l4-3.500z" fill="#777" /></svg>
    </div>
  </div>
);

const Terminal = () => {
  const [tab, setTab] = useState("Kontohistorie");
  const tabs = [
    ["Handel"], ["Belastung"], ["Kontohistorie"], ["Nachrichten"], ["Alarme"], ["Posteingang", 19],
    ["Markt", 48], ["Signale"], ["Bibliothek"], ["Expert Advisors"], ["Journal"],
  ];
  return (
    <section className="relative flex">
      <div className="flex w-3 shrink-0 flex-col items-center">
        <button type="button" aria-label="Terminal schließen" className="my-[4px] flex">
          <svg width="6" height="6" viewBox="0 0 6 6"><path d="M.5.5l5 5M5.500.5l-5 5" stroke="#000" strokeWidth="1.5" /></svg>
        </button>
        <h2 className="w-[11px] flex-1 rotate-180 bg-linear-to-b from-[#dbe9f8] to-[#9dbde0] pt-[2px] text-[10px] leading-[11px] text-[#222] [writing-mode:vertical-rl]">
          Terminal
        </h2>
      </div>
      <div className="min-w-0 flex-1">
        <div className="flex h-[86px] border-b border-black">
          <div className="min-w-0 flex-1 overflow-hidden border-t-2 border-r border-[#9c07b8] bg-[#d24bfd]">
            <table className="w-full table-fixed border-collapse text-[#15001c]">
              <colgroup>
                {ORDER_COLS.map((w, i) => <col key={i} className={w} />)}
              </colgroup>
              <thead>
                <tr className="h-[22px] border-b border-[#c04ae0] bg-[#cf46f7]">
                  {ORDER_HEADS.map((h, i) => (
                    <th key={i} className={`border-r border-[#bb42dd] py-0 font-normal ${i === 0 ? "pl-[7px] text-left" : "pr-[2px] text-right"}`}>
                      {i === 1 ? (
                        <span className="inline-flex items-center gap-[10px]">
                          {h}
                          <svg width="7" height="6" viewBox="0 0 7 6"><path d="M0 .5h7M.5.5l3 5" fill="none" stroke="#5a1a70" /></svg>
                        </span>
                      ) : h}
                    </th>
                  ))}
                </tr>
              </thead>
              <tbody>
                {ORDERS.map((row, r) => (
                  <tr key={r} className={`h-[18px] border-b border-[#b445d6] ${r % 2 ? "bg-[#c247e8]" : "bg-[#d450ff]"}`}>
                    {row.map((cell, i) => (
                      <td
                        key={i}
                        className={`border-r border-[#b94bd8] p-0 pr-px whitespace-nowrap ${
                          i === 0 ? "pl-[5px]" : "text-right"
                        } ${i === 7 && (r === 1 || r === 2) ? "bg-[#3c4060]" : ""}`}
                      >
                        {i === 0 ? <OrderDocIcon /> : cell}
                      </td>
                    ))}
                  </tr>
                ))}
              </tbody>
            </table>
          </div>
          <Scrollbar thumb="mt-1 h-[14px]" />
        </div>
        <div className="flex h-[21px] items-start border-b border-[#aaa] pl-[2px] text-[9px]">
          {tabs.map(([name, count]) => (
            <div key={name} className="flex items-center">
              <button
                type="button"
                onClick={() => setTab(name)}
                className={`flex h-[17px] items-center whitespace-nowrap ${
                  tab === name ? "border border-t-0 border-black bg-white px-[7px] text-black" : "px-[9px] text-[#7c7c7c]"
                }`}
              >
                {name}
                {count && <b className="pt-[3px] pl-[2px] text-[8px] text-[#e02020]">{count}</b>}
              </button>
              {name !== "Belastung" && name !== "Kontohistorie" && <span className="h-[11px] w-px bg-[#777]" />}
            </div>
          ))}
        </div>
      </div>
      {/* account numbers are hidden behind a soft smudge */}
      <div className="absolute top-[27px] left-[33px] h-[57px] w-[66px] bg-linear-to-r from-[#c93fd0] via-[#cf3fcb] to-[#b548ec]" />
      <Callout className="top-[21px] left-[386px] h-[55px] w-[267px] border-[#463459] bg-[#604a7b] pr-1 text-[22px]">
        Account information
      </Callout>
    </section>
  );
};

const App = () => {
  return (
    <div className="flex min-h-screen flex-col overflow-hidden bg-[#f0f0f0] font-['Noto_Sans',Tahoma,sans-serif] text-[10px] leading-3">
      <TitleBar />
      <div className="flex flex-1">
        <div className="w-2 shrink-0 border-r border-l-2 border-l-[#3a3142] border-r-[#ddd] bg-[#a795b0]" />
        <div className="flex min-w-0 flex-1 flex-col">
          <header className="mr-px ml-[3px] border-2 border-[#e8423d]">
            <MenuBar />
            <ToolBar />
          </header>
          <main className="flex">
            <aside className="w-[215px] shrink-0 pr-px pl-[2px]">
              <MarketWatch />
              <Navigator />
            </aside>
            <div className="ml-1 min-w-0 flex-1 border-l border-[#888] bg-white">
              <PriceChart />
              <Macd />
              <div className="flex h-[17px] overflow-hidden bg-white text-[9px] leading-[14px] text-black">
                {DATES.map((d) => (
                  <span key={d} className="w-[58px] shrink-0 whitespace-nowrap">
                    <span className="block h-[2px] w-px bg-black" />
                    {d}
                  </span>
                ))}
              </div>
              <div className="bg-[#f0f0f0] pb-[3px]">
                <ChartTabs />
              </div>
            </div>
          </main>
          <Terminal />
        </div>
      </div>
    </div>
  );
};

export default App;
